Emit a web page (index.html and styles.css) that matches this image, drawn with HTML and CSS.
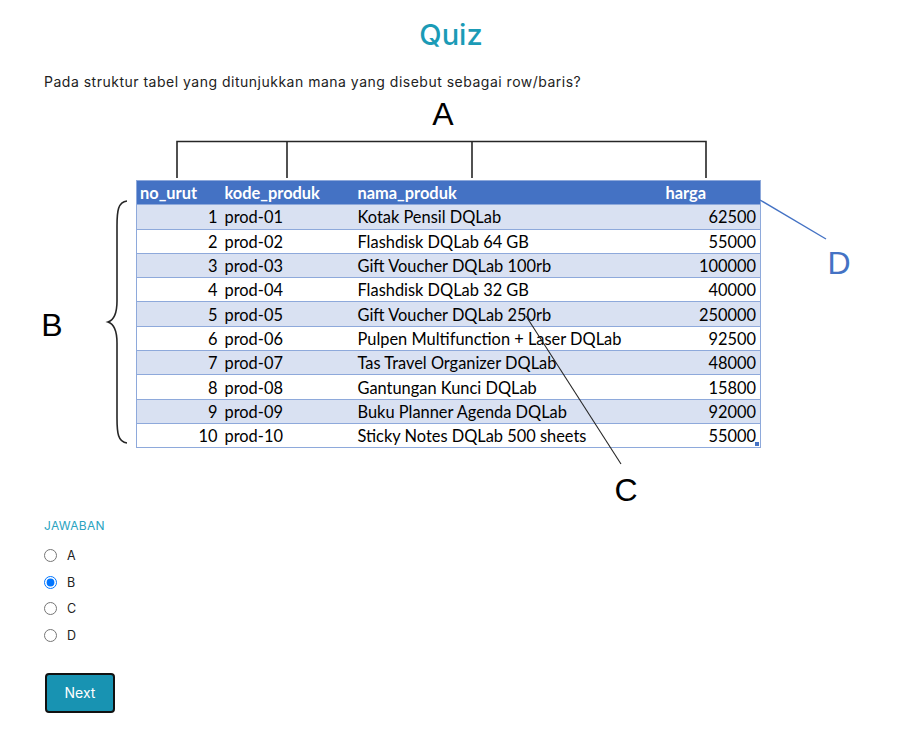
FILE: index.html
```html
<!DOCTYPE html>
<html lang="id">
<head>
<meta charset="utf-8">
<title>Quiz</title>
<link rel="stylesheet" href="styles.css">
</head>
<body>
<main class="page">
  <h1 class="title">Quiz</h1>
  <p class="question">Pada struktur tabel yang ditunjukkan mana yang disebut sebagai row/baris?</p>

  <figure class="figure">
    <table class="sheet">
      <colgroup>
        <col class="c1"><col class="c2"><col class="c3"><col class="c4">
      </colgroup>
      <thead>
        <tr><th>no_urut</th><th>kode_produk</th><th>nama_produk</th><th>harga</th></tr>
      </thead>
      <tbody>
        <tr><td class="num">1</td><td>prod-01</td><td>Kotak Pensil DQLab</td><td class="num">62500</td></tr>
        <tr><td class="num">2</td><td>prod-02</td><td>Flashdisk DQLab 64 GB</td><td class="num">55000</td></tr>
        <tr><td class="num">3</td><td>prod-03</td><td>Gift Voucher DQLab 100rb</td><td class="num">100000</td></tr>
        <tr><td class="num">4</td><td>prod-04</td><td>Flashdisk DQLab 32 GB</td><td class="num">40000</td></tr>
        <tr><td class="num">5</td><td>prod-05</td><td>Gift Voucher DQLab 250rb</td><td class="num">250000</td></tr>
        <tr><td class="num">6</td><td>prod-06</td><td>Pulpen Multifunction + Laser DQLab</td><td class="num">92500</td></tr>
        <tr><td class="num">7</td><td>prod-07</td><td>Tas Travel Organizer DQLab</td><td class="num">48000</td></tr>
        <tr><td class="num">8</td><td>prod-08</td><td>Gantungan Kunci DQLab</td><td class="num">15800</td></tr>
        <tr><td class="num">9</td><td>prod-09</td><td>Buku Planner Agenda DQLab</td><td class="num">92000</td></tr>
        <tr><td class="num">10</td><td>prod-10</td><td>Sticky Notes DQLab 500 sheets</td><td class="num last">55000</td></tr>
      </tbody>
    </table>

    <svg class="overlay" viewBox="0 95 902 415" width="902" height="415">
      <g class="ink">
        <path d="M177 182 V145.5 H706 V182" />
        <path d="M287 145.5 V182" />
        <path d="M472 145.5 V182" />
        <path d="M127 205 C118 206 117 215 117 230 L117 305 C117 318 114 324 108 326 C114 328 117 334 117 347 L117 422 C117 437 118 446 127 447" />
        <path class="thin" d="M526 320 L621 468" />
      </g>
      <path class="blue-line" d="M760 204 L826 243" />
      <text class="lbl" x="443" y="129" text-anchor="middle">A</text>
      <text class="lbl" x="52" y="340" text-anchor="middle">B</text>
      <text class="lbl" x="626" y="505" text-anchor="middle">C</text>
      <text class="lbl blue" x="839" y="278" text-anchor="middle">D</text>
    </svg>
  </figure>

  <section class="answers">
    <div class="answers-label">JAWABAN</div>
    <label class="opt"><input type="radio" name="ans" value="A"><span>A</span></label>
    <label class="opt"><input type="radio" name="ans" value="B" checked><span>B</span></label>
    <label class="opt"><input type="radio" name="ans" value="C"><span>C</span></label>
    <label class="opt"><input type="radio" name="ans" value="D"><span>D</span></label>
    <button class="next" type="button">Next</button>
  </section>
</main>
</body>
</html>
```
FILE: styles.css
```css
* { box-sizing: border-box; }
html, body { margin: 0; background: #fff; }
body {
  font-family: Inter, "Open Sans", "Liberation Sans", sans-serif;
  color: #212529;
}
.page {
  padding: 0 44px;
  width: 902px;
}
.title {
  margin: 0;
  padding-top: 16px;
  text-align: center;
  font-size: 29px;
  line-height: 38px;
  font-weight: 500;
  color: #1b9bb6;
}
.question {
  margin: 18px 0 0;
  font-size: 14px;
  letter-spacing: 0.5px;
  line-height: 19px;
  color: #222;
}
.figure {
  position: relative;
  margin: 0 0 0 -44px;
  width: 902px;
  height: 415px;
  padding: 89px 0 0 136px;
}
.overlay {
  position: absolute;
  left: 0;
  top: 0;
  overflow: visible;
}
.ink path {
  fill: none;
  stroke: #262626;
  stroke-width: 1.6;
}
.ink path.thin { stroke-width: 1.1; }
.blue-line {
  fill: none;
  stroke: #4472c4;
  stroke-width: 1.4;
}
.lbl {
  font-family: "Liberation Sans", Arial, sans-serif;
  font-size: 32px;
  fill: #000;
}
.lbl.blue { fill: #4472c4; }

.sheet {
  border-collapse: collapse;
  table-layout: fixed;
  width: 624px;
  font-family: Lato, "Noto Sans", sans-serif;
  font-size: 16.4px;
  color: #000;
  border: 1px solid #8ea9db;
}
.c1 { width: 84px; }
.c2 { width: 133px; }
.c3 { width: 308px; }
.c4 { width: 99px; }
.sheet tr { height: 24.3px; }
.sheet th {
  background: #4472c4;
  color: #fff;
  font-weight: 700;
  text-align: left;
  padding: 0 4px 0 3px;
  white-space: nowrap;
}
.sheet th:nth-child(2), .sheet td:nth-child(2) { padding-left: 4px; }
.sheet th:nth-child(3), .sheet td:nth-child(3) { padding-left: 4px; }
.sheet th:nth-child(4) { padding-left: 4px; }
.sheet td {
  padding: 0 4px 0 3px;
  border-top: 1px solid #8ea9db;
  white-space: nowrap;
}
.sheet tbody tr:nth-child(odd) td { background: #d9e1f2; }
.sheet td.num { text-align: right; padding-right: 4px; }
.sheet td.num:first-child { padding-right: 3px; }
.sheet td.last { position: relative; }
.sheet td.last::after {
  content: "";
  position: absolute;
  right: 1px;
  bottom: 1px;
  width: 4px;
  height: 4px;
  background: #4472c4;
}

.answers-label {
  font-size: 12px;
  line-height: 16px;
  letter-spacing: 0.3px;
  color: #2aa3bf;
  margin-top: 12px;
  margin-bottom: 8px;
}
.opt {
  display: flex;
  align-items: center;
  gap: 10px;
  height: 26.7px;
  font-size: 12.5px;
  color: #222;
}
.opt input {
  margin: 0;
  width: 13px;
  height: 13px;
}
.next {
  margin-top: 24px;
  margin-left: 1px;
  width: 70px;
  height: 40px;
  background: #1893b2;
  color: #fff;
  border: 2px solid #111;
  border-radius: 4px;
  font-family: Inter, "Open Sans", sans-serif;
  font-size: 14px;
}
```
